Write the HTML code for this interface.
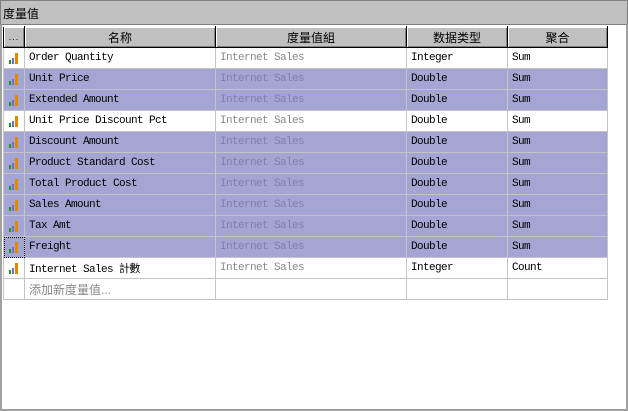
<!DOCTYPE html>
<html><head><meta charset="utf-8"><style>
*{margin:0;padding:0;box-sizing:border-box}
body{width:628px;height:411px;background:#fff;position:relative;overflow:hidden;font-family:"Liberation Mono","Noto Sans CJK SC",monospace;font-size:11px;letter-spacing:-0.6px}
#title{position:absolute;left:0;top:0;width:628px;height:24px;background:#c0c0c0;border-top:1px solid #808080;border-left:1px solid #808080;border-right:1px solid #808080;font-family:"Liberation Sans","Noto Sans CJK SC",sans-serif;font-size:12px;letter-spacing:0;padding:4px 0 0 2px;color:#000}
#panel{position:absolute;left:0;top:24px;width:628px;height:387px;border:2px solid #a0a0a0;border-top:1px solid #808080;background:#fff}
table{position:absolute;left:3px;top:26px;border-collapse:collapse;table-layout:fixed}
td{height:21px;border:1px solid #c4c4c4;white-space:nowrap;overflow:hidden;padding:0 0 0 4px;color:#000}
th{height:21px;background:#c0c0c0;border:1px solid #000;border-top:1px solid #fff;font-weight:normal;font-family:"Liberation Sans","Noto Sans CJK SC",sans-serif;font-size:12px;letter-spacing:0;box-shadow:inset 1px 1px 0 #fff,inset -1px -1px 0 #808080}
tr.s td{background:#a5a5d3}
td.g{color:#888}
tr.s td.g{color:#8080a8}
td.i{padding:0;position:relative}
.ic{position:absolute;left:5px;top:5px;width:10px;height:11px}
.ic i{position:absolute;bottom:0}
</style></head><body>
<div id="title">度量值</div>
<div id="panel"></div>
<table>
<colgroup><col style="width:21px"><col style="width:191px"><col style="width:191px"><col style="width:101px"><col style="width:100px"></colgroup>
<tr><th style="font-size:9px;letter-spacing:1px">...</th><th>名称</th><th>度量值組</th><th>数据类型</th><th>聚合</th></tr>
<tr><td class="i"><span class="ic"><i style="left:0;width:2px;height:4px;background:#1a9a1a"></i><i style="left:3px;width:2px;height:6px;background:#6f6fc8"></i><i style="left:6px;width:3px;height:11px;background:#e08a00"></i></span></td><td>Order Quantity</td><td class="g">Internet Sales</td><td>Integer</td><td>Sum</td></tr>
<tr class="s"><td class="i"><span class="ic"><i style="left:0;width:2px;height:4px;background:#1a9a1a"></i><i style="left:3px;width:2px;height:6px;background:#6f6fc8"></i><i style="left:6px;width:3px;height:11px;background:#e08a00"></i></span></td><td>Unit Price</td><td class="g">Internet Sales</td><td>Double</td><td>Sum</td></tr>
<tr class="s"><td class="i"><span class="ic"><i style="left:0;width:2px;height:4px;background:#1a9a1a"></i><i style="left:3px;width:2px;height:6px;background:#6f6fc8"></i><i style="left:6px;width:3px;height:11px;background:#e08a00"></i></span></td><td>Extended Amount</td><td class="g">Internet Sales</td><td>Double</td><td>Sum</td></tr>
<tr><td class="i"><span class="ic"><i style="left:0;width:2px;height:4px;background:#1a9a1a"></i><i style="left:3px;width:2px;height:6px;background:#6f6fc8"></i><i style="left:6px;width:3px;height:11px;background:#e08a00"></i></span></td><td>Unit Price Discount Pct</td><td class="g">Internet Sales</td><td>Double</td><td>Sum</td></tr>
<tr class="s"><td class="i"><span class="ic"><i style="left:0;width:2px;height:4px;background:#1a9a1a"></i><i style="left:3px;width:2px;height:6px;background:#6f6fc8"></i><i style="left:6px;width:3px;height:11px;background:#e08a00"></i></span></td><td>Discount Amount</td><td class="g">Internet Sales</td><td>Double</td><td>Sum</td></tr>
<tr class="s"><td class="i"><span class="ic"><i style="left:0;width:2px;height:4px;background:#1a9a1a"></i><i style="left:3px;width:2px;height:6px;background:#6f6fc8"></i><i style="left:6px;width:3px;height:11px;background:#e08a00"></i></span></td><td>Product Standard Cost</td><td class="g">Internet Sales</td><td>Double</td><td>Sum</td></tr>
<tr class="s"><td class="i"><span class="ic"><i style="left:0;width:2px;height:4px;background:#1a9a1a"></i><i style="left:3px;width:2px;height:6px;background:#6f6fc8"></i><i style="left:6px;width:3px;height:11px;background:#e08a00"></i></span></td><td>Total Product Cost</td><td class="g">Internet Sales</td><td>Double</td><td>Sum</td></tr>
<tr class="s"><td class="i"><span class="ic"><i style="left:0;width:2px;height:4px;background:#1a9a1a"></i><i style="left:3px;width:2px;height:6px;background:#6f6fc8"></i><i style="left:6px;width:3px;height:11px;background:#e08a00"></i></span></td><td>Sales Amount</td><td class="g">Internet Sales</td><td>Double</td><td>Sum</td></tr>
<tr class="s"><td class="i"><span class="ic"><i style="left:0;width:2px;height:4px;background:#1a9a1a"></i><i style="left:3px;width:2px;height:6px;background:#6f6fc8"></i><i style="left:6px;width:3px;height:11px;background:#e08a00"></i></span></td><td>Tax Amt</td><td class="g">Internet Sales</td><td>Double</td><td>Sum</td></tr>
<tr class="s"><td class="i" style="outline:1px dotted #000;outline-offset:-1px"><span class="ic"><i style="left:0;width:2px;height:4px;background:#1a9a1a"></i><i style="left:3px;width:2px;height:6px;background:#6f6fc8"></i><i style="left:6px;width:3px;height:11px;background:#e08a00"></i></span></td><td>Freight</td><td class="g">Internet Sales</td><td>Double</td><td>Sum</td></tr>
<tr><td class="i"><span class="ic"><i style="left:0;width:2px;height:4px;background:#1a9a1a"></i><i style="left:3px;width:2px;height:6px;background:#6f6fc8"></i><i style="left:6px;width:3px;height:11px;background:#e08a00"></i></span></td><td>Internet Sales 計數</td><td class="g">Internet Sales</td><td>Integer</td><td>Count</td></tr>
<tr><td></td><td class="g" style="font-family:'Liberation Sans','Noto Sans CJK SC',sans-serif;font-size:12px;letter-spacing:0">添加新度量值...</td><td></td><td></td><td></td></tr>
</table>
</body></html>
